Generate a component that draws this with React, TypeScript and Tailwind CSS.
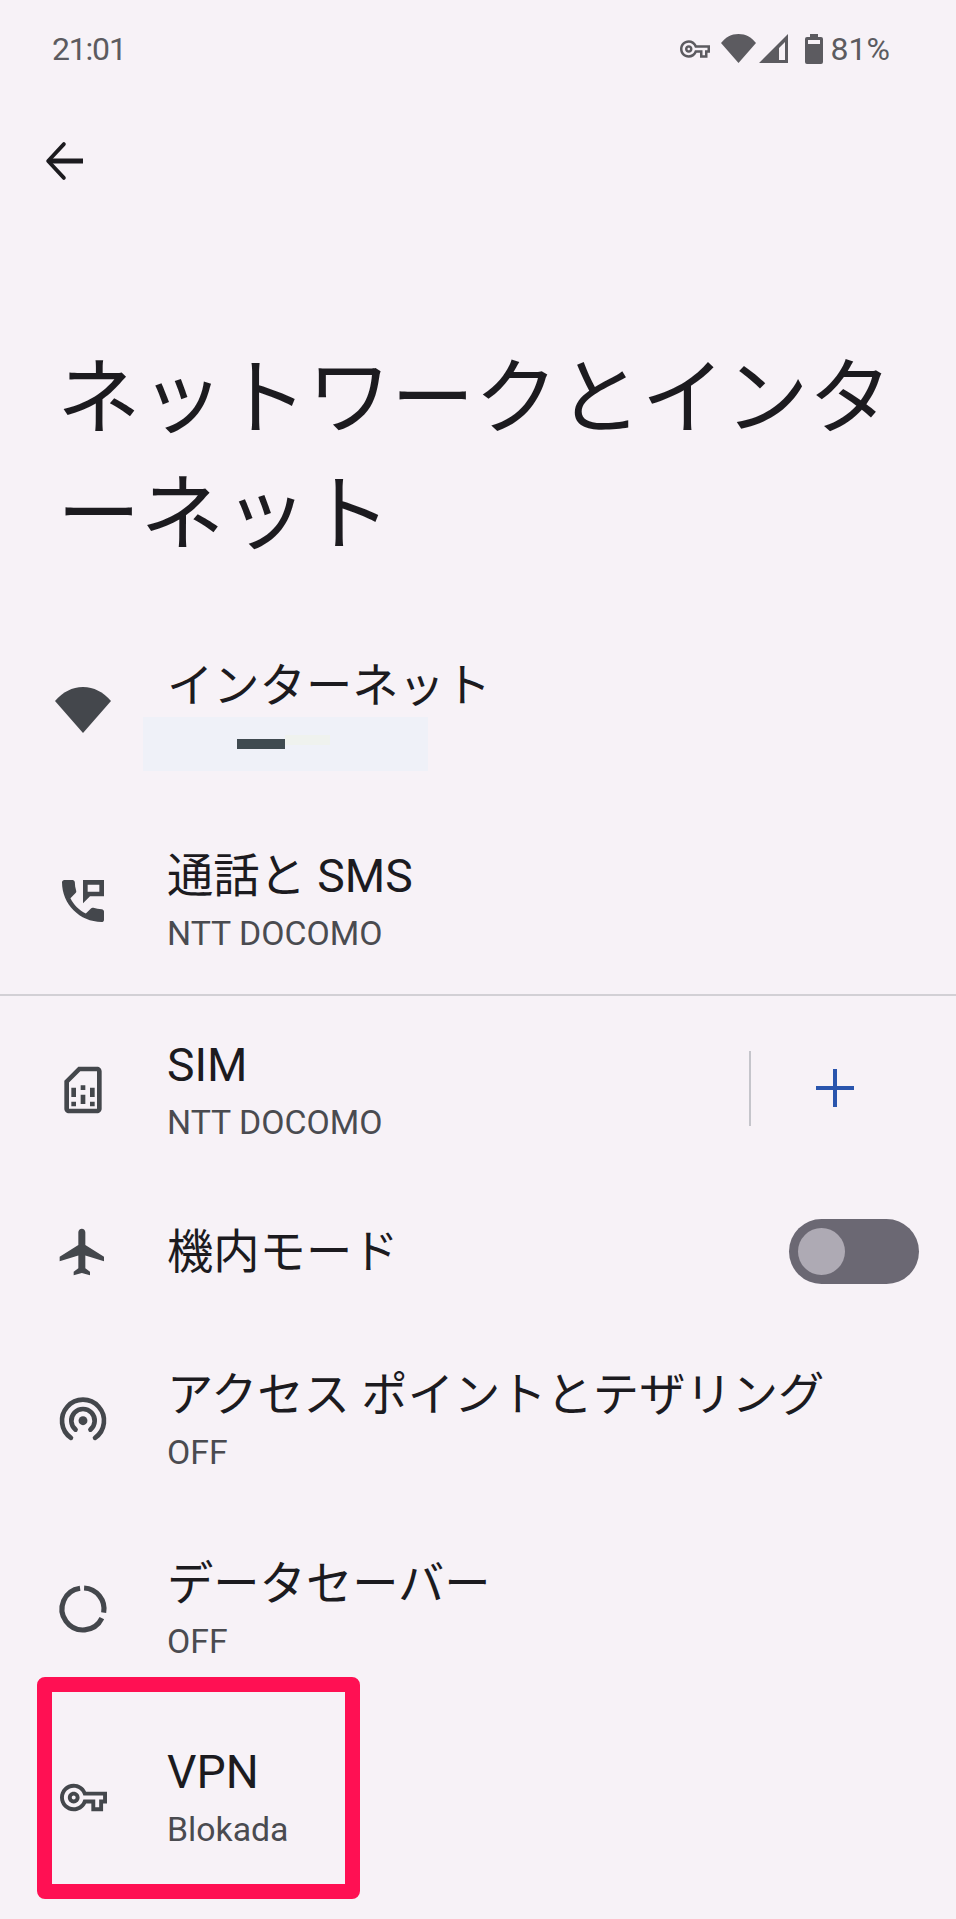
import type { ReactNode } from 'react';

const KEY =
  'M22 19h-6v-4h-2.68c-1.14 2.42-3.6 4-6.32 4-3.86 0-7-3.14-7-7s3.14-7 7-7c2.72 0 5.17 1.58 6.32 4H24v6h-2v4zm-4-2h2v-4h2v-2H11.94l-.23-.67C11.01 8.34 9.11 7 7 7c-2.76 0-5 2.24-5 5s2.24 5 5 5c2.11 0 4.01-1.34 4.71-3.33l.23-.67H18v4zM7 15c-1.65 0-3-1.35-3-3s1.35-3 3-3 3 1.35 3 3-1.35 3-3 3zm0-4c-.55 0-1 .45-1 1s.45 1 1 1 1-.45 1-1-.45-1-1-1z';

function Fill({ d, size = 56 }: { d: string; size?: number }) {
  return (
    <svg width={size} height={size} viewBox="0 0 24 24" fill="#44474c" fillRule="evenodd">
      <path d={d} />
    </svg>
  );
}

const WifiIcon = () => (
  <svg width="56" height="46" viewBox="0 0 56 46" fill="#44474c">
    <path d="M0 14 C8 5 17 0 28 0 C39 0 48 5 56 14 L28 46 Z" />
  </svg>
);

const PhoneIcon = () => (
  <Fill d="M20 15.5c-1.25 0-2.45-.2-3.57-.57-.1-.03-.21-.05-.31-.05-.26 0-.51.1-.71.29l-2.2 2.2c-2.83-1.44-5.15-3.75-6.59-6.59l2.2-2.21c.28-.26.36-.65.25-1C8.7 6.45 8.5 5.25 8.5 4c0-.55-.45-1-1-1H4c-.55 0-1 .45-1 1 0 9.39 7.61 17 17 17 .55 0 1-.45 1-1v-3.5c0-.55-.45-1-1-1zM12 3v10l3-3h6V3h-9zm2 2h5v3h-5z" />
);

const SimIcon = () => (
  <Fill d="M18 2h-8L4 8v12c0 1.1.9 2 2 2h12c1.1 0 2-.9 2-2V4c0-1.1-.9-2-2-2zm0 18H6V8.83L10.83 4H18v16zM7 17h2v2H7zm8 0h2v2h-2zM7 11h2v4H7zm4 3h2v4h-2zm0-4h2v2h-2zm4 1h2v4h-2z" />
);

const PlaneIcon = () => (
  <Fill d="M21 16v-2l-8-5V3.5c0-.83-.67-1.5-1.5-1.5S10 2.67 10 3.5V9l-8 5v2l8-2.5V19l-2 1.5V22l3.5-1 3.5 1v-1.5L13 19v-5.5l8 2.5z" />
);

const HotspotIcon = () => (
  <svg width="56" height="56" viewBox="0 0 24 24" fill="none" stroke="#44474c" strokeWidth="2" strokeLinecap="round">
    <path d="M6.84 19.67A9 9 0 1 1 17.16 19.67" />
    <path d="M8.8 16.13A5 5 0 1 1 15.2 16.13" />
    <circle cx="12" cy="12.3" r="1.9" fill="#44474c" stroke="none" />
  </svg>
);

const DataSaverIcon = () => (
  <svg width="56" height="56" viewBox="0 0 24 24" fill="none" stroke="#44474c" strokeWidth="2.2">
    <path d="M12.47 3.01A9 9 0 0 1 20.86 13.56" />
    <path d="M20.09 15.95A9 9 0 1 1 10.75 3.09" />
  </svg>
);

const KeyIcon = () => <Fill d={KEY} size={47} />;

function Row({
  icon,
  title,
  sub,
  right,
  className,
}: {
  icon: ReactNode;
  title: string;
  sub?: ReactNode;
  right?: ReactNode;
  className: string;
}) {
  return (
    <div className={`flex items-center pr-[37px] ${className}`}>
      <div className={`flex w-[167px] shrink-0 justify-center pr-[1px] ${sub ? 'mb-2' : ''}`}>{icon}</div>
      <div className="min-w-0 flex-1">
        <div className="text-[46.3px] leading-[58px] text-[#1c1b1f] whitespace-nowrap">{title}</div>
        {typeof sub === 'string' ? (
          <div className="text-[33.8px] leading-[58px] text-[#4a4b50]">{sub}</div>
        ) : (
          sub
        )}
      </div>
      {right}
    </div>
  );
}

export default function App() {
  return (
    <div className="relative h-[1919px] w-[956px] overflow-hidden bg-[#f7f2f7] font-['Roboto','Noto_Sans_CJK_JP',sans-serif]">
      <div className="flex h-[97px] items-center justify-between pl-[52px] pr-[66px] text-[32px] text-[#5c5b60]">
        <span className="tracking-[-1.2px]">21:01</span>
        <div className="flex items-center">
          <svg width="30" height="30" viewBox="0 0 24 24" fill="#5c5b60" fillRule="evenodd">
            <path d={KEY} />
          </svg>
          <svg className="ml-[11px]" width="35" height="29" viewBox="0 0 35 29" fill="#5c5b60">
            <path d="M0 9 C5 3 10 0 17.5 0 C25 0 30 3 35 9 L17.5 29 Z" />
          </svg>
          <svg className="ml-[3px]" width="29" height="29" viewBox="0 0 29 29" fill="#5c5b60" fillRule="evenodd">
            <path d="M0 29 L29 0 V29 Z M20 26 H26 V8 L20 14 Z" />
          </svg>
          <svg className="ml-[17px]" width="18" height="30" viewBox="0 0 18 30" fill="#5c5b60" fillRule="evenodd">
            <path d="M5 0 H13 V3 H16 Q18 3 18 5 V28 Q18 30 16 30 H2 Q0 30 0 28 V5 Q0 3 2 3 H5 Z M3 6 V10 H15 V6 Z" />
          </svg>
          <span className="ml-[8px]">81%</span>
        </div>
      </div>

      <div className="mt-[37px] pl-[38px]">
        <svg width="54" height="54" viewBox="0 0 24 24" fill="none" stroke="#1c1b1f">
          <path d="M20 12H5" strokeWidth="2.2" />
          <path d="M11.5 4.5L4.5 12L11.5 19.5" strokeWidth="1.7" strokeLinecap="round" strokeLinejoin="round" />
        </svg>
      </div>

      <h1 className="mt-[153px] pl-[57px] text-[83.5px] font-normal leading-[116px] text-[#1c1b1f] whitespace-nowrap">
        ネットワークとインタ
        <br />
        ーネット
      </h1>

      <Row
        className="mt-[84px]"
        icon={<WifiIcon />}
        title="インターネット"
        sub={
          <div className="-ml-[24px] mt-[2px] flex h-[54px] w-[285px] items-start bg-[#eff1f8] pl-[94px] pt-[22px]">
            <div className="h-[10px] w-[48px] bg-[#3f4a50]" />
            <div className="-mt-[4px] h-[10px] w-[45px] bg-[#eff2ee]" />
          </div>
        }
      />
      <Row className="mt-[76px]" icon={<PhoneIcon />} title="通話と SMS" sub="NTT DOCOMO" />
      <div className="mt-[31px] h-[2px] bg-[#d2d0d5]" />
      <Row
        className="mt-[40px]"
        icon={<SimIcon />}
        title="SIM"
        sub="NTT DOCOMO"
        right={
          <div className="mb-3 flex h-[75px] w-[170px] shrink-0 items-center">
            <div className="h-full w-[2px] bg-[#c5c5cb]" />
            <div className="flex flex-1 justify-center">
              <svg width="38" height="38" viewBox="0 0 38 38" fill="#2a55ad">
                <path d="M17 0h4v17h17v4H21v17h-4V21H0v-4h17z" />
              </svg>
            </div>
          </div>
        }
      />
      <Row
        className="mt-[67px]"
        icon={<PlaneIcon />}
        title="機内モード"
        right={
          <div className="flex h-[65px] w-[130px] shrink-0 items-center rounded-full bg-[#6b6873] pl-[9px]">
            <div className="h-[47px] w-[47px] rounded-full bg-[#aeaab4]" />
          </div>
        }
      />
      <Row className="mt-[82px]" icon={<HotspotIcon />} title="アクセス ポイントとテザリング" sub="OFF" />
      <Row className="mt-[73px]" icon={<DataSaverIcon />} title="データセーバー" sub="OFF" />
      <Row className="mt-[72px]" icon={<KeyIcon />} title="VPN" sub="Blokada" />

      {/* annotation box drawn over the screenshot */}
      <div className="absolute left-[37px] top-[1677px] h-[222px] w-[323px] rounded-[8px] border-[15px] border-[#ff1053]" />
    </div>
  );
}
